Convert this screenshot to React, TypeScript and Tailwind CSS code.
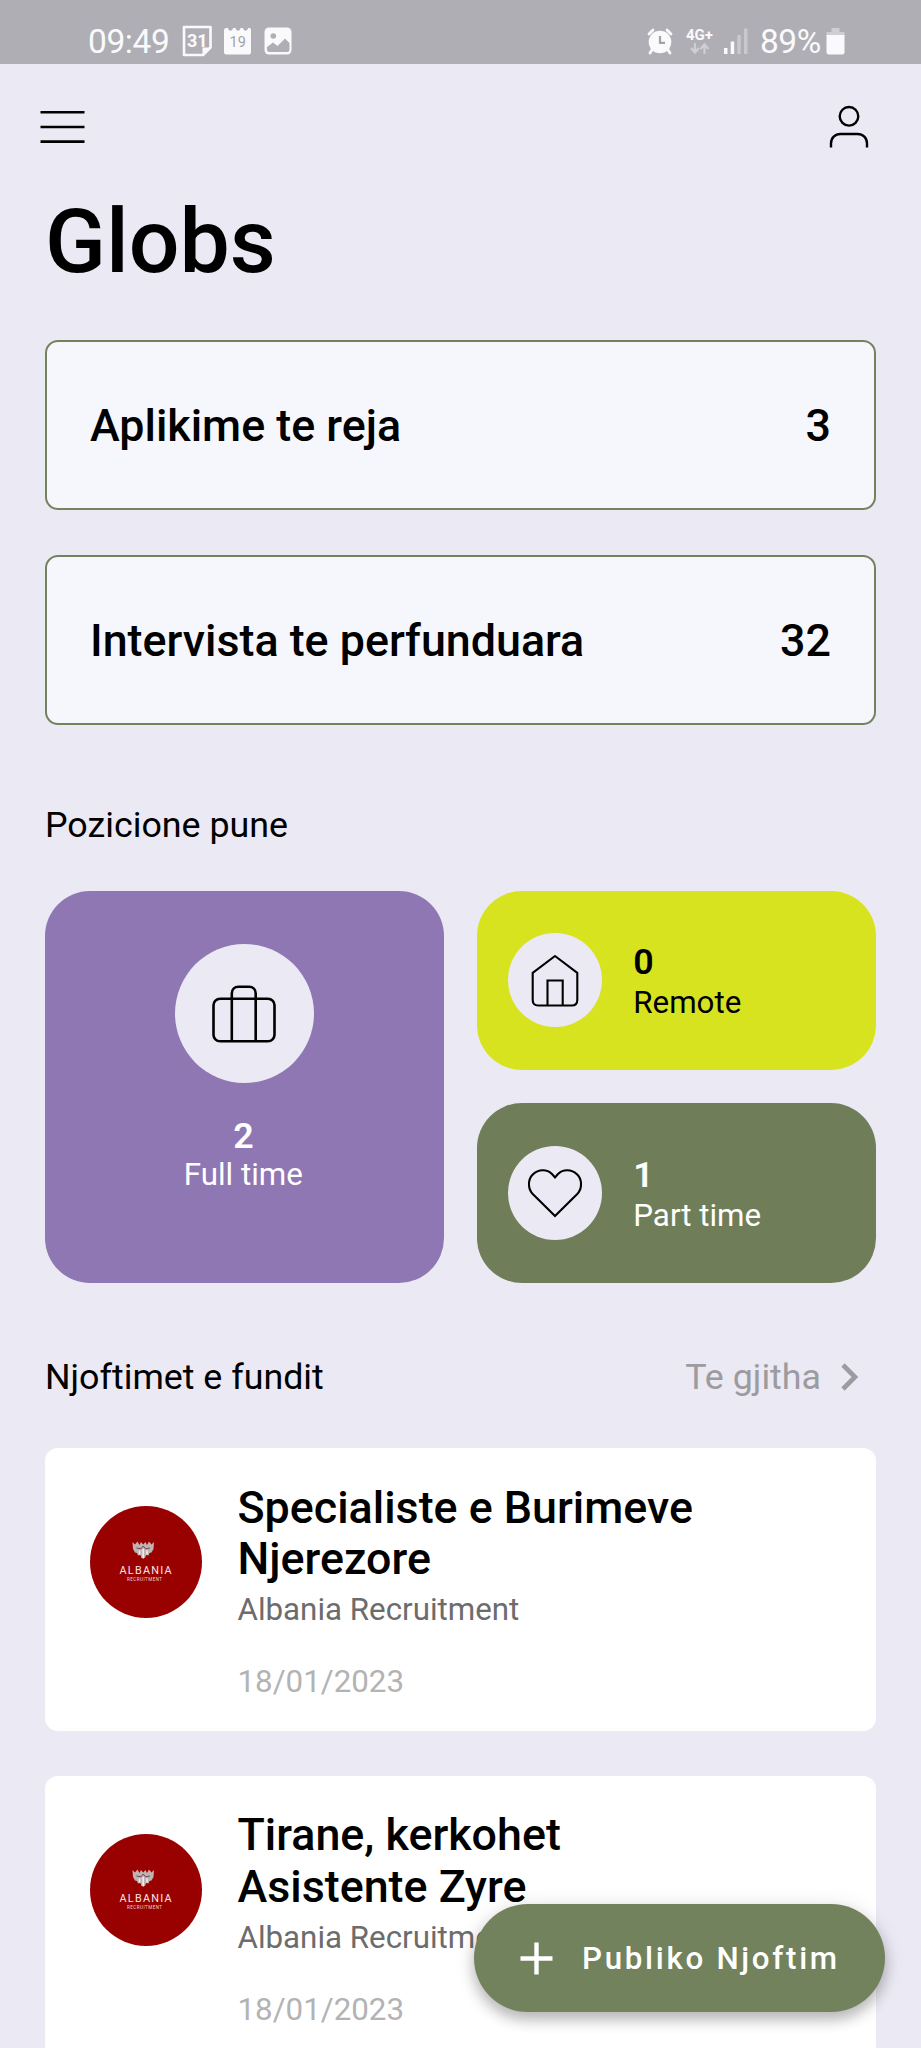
import React from 'react';

interface Stat {
    label: string;
    value: number;
}

interface Job {
    id: number;
    title: string[];
    company: string;
    date: string;
}

const stats: Stat[] = [
    { label: 'Aplikime te reja', value: 3 },
    { label: 'Intervista te perfunduara', value: 32 },
];

const jobs: Job[] = [
    { id: 1, title: ['Specialiste e Burimeve', 'Njerezore'], company: 'Albania Recruitment', date: '18/01/2023' },
    { id: 2, title: ['Tirane, kerkohet', 'Asistente Zyre'], company: 'Albania Recruitment', date: '18/01/2023' },
];

const StatusBar: React.FC = () => (
    <div className="flex h-16 items-end justify-between bg-[#afaeb5] pr-[76px] pb-[5px] pl-[88px] text-[#fafafc]">
        <div className="flex items-center">
            <span className="w-[94px] pt-[3px] text-[33.5px] leading-[34px] tracking-[-0.4px]">09:49</span>
            {/* Google calendar */}
            <svg width="31" height="32" viewBox="0 0 31 32" fill="none">
                <path d="M2 2H28.5V22.5L21 30H2Z" stroke="currentColor" strokeWidth="2.6" strokeLinejoin="round" />
                <path d="M20.5 30V22.5H28.5Z" fill="currentColor" />
                <text x="15.3" y="22.3" textAnchor="middle" fontSize="18" fontWeight="700" fill="currentColor">31</text>
            </svg>
            {/* Samsung calendar */}
            <svg width="28" height="28" viewBox="0 0 28 28" className="ml-[11px]">
                <path d="M2.5 1H4C4.5 4.5 8.5 4.5 9 1H11.5C12 4.5 16 4.5 16.5 1H19C19.5 4.5 23.5 4.5 24 1H25.5Q27 1 27 3V25Q27 27.5 24.5 27.5H2.5Q0 27.5 0 25V3Q0 1 2.5 1Z" fill="currentColor" />
                <text x="13.7" y="20" textAnchor="middle" fontSize="14.5" fill="#a3a2a8">19</text>
            </svg>
            {/* Gallery */}
            <svg width="28" height="28" viewBox="0 0 28 28" className="ml-3">
                <rect x="0.5" y="0.5" width="27" height="27" rx="4.5" fill="currentColor" />
                <circle cx="9.3" cy="9" r="2.8" fill="#afaeb5" />
                <path d="M3 20L9 15.5L13.5 19L21 11.5L25.5 16V22.5Q25.5 25 23 25H5Q3 25 3 22.5Z" fill="#afaeb5" />
            </svg>
        </div>
        <div className="flex items-center">
            <svg width="26" height="28" viewBox="0 0 26 28" fill="none" stroke="currentColor" className="-ml-px">
                <circle cx="13" cy="15" r="11.3" fill="currentColor" stroke="none" />
                <path d="M2 7L6 3M24 7L20 3M5.5 22L3 26M20.5 22L23 26" strokeWidth="2.8" strokeLinecap="round" />
                <path d="M13 9V15.8H18" stroke="#a3a2a8" strokeWidth="2.2" />
            </svg>
            <svg width="28" height="28" viewBox="0 0 28 28" className="ml-[13px]">
                <text x="0" y="13.3" textLength="27" fontSize="15" fontWeight="700" fill="currentColor">4G+</text>
                <path d="M9 16V25M5 21L9 25.5L13 21M18.5 27V17.5M14.5 22L18.5 17.5L22.5 22" fill="none" stroke="#cfced3" strokeWidth="2.2" />
            </svg>
            <svg width="25" height="28" viewBox="0 0 25 28" className="ml-2.5">
                <rect x="0" y="21" width="3.5" height="6" fill="currentColor" />
                <rect x="6.7" y="14.5" width="3.5" height="12.5" fill="currentColor" />
                <rect x="13.3" y="8" width="3.5" height="19" fill="#c9c8cd" />
                <rect x="20" y="1.5" width="3.5" height="25.5" fill="#c9c8cd" />
            </svg>
            <span className="ml-[11px] w-[62px] pt-[3px] text-[33.5px] leading-[34px] tracking-[-0.5px]">89%</span>
            <svg width="19" height="28" viewBox="0 0 19 28" className="ml-[4px]">
                <path d="M5.5 1H13.5V5H18.5V10H0.5V5H5.5Z" fill="#cfced3" />
                <path d="M0.5 8H18.5V25Q18.5 27.5 16 27.5H3Q0.5 27.5 0.5 25Z" fill="currentColor" />
            </svg>
        </div>
    </div>
);

const Header: React.FC = () => (
    <header className="flex h-[125px] items-center justify-between pr-[52px] pl-10">
        <button aria-label="Menu">
            <svg width="45" height="34" viewBox="0 0 45 34" stroke="#000" strokeWidth="2.6">
                <path d="M0.5 2.3H44.5M0.5 17H44.5M0.5 31.6H44.5" />
            </svg>
        </button>
        <button aria-label="Profile" className="-mt-px">
            <svg width="40" height="43" viewBox="0 0 40 43" fill="none" stroke="#000" strokeWidth="2.4">
                <circle cx="20" cy="11.3" r="9.3" />
                <path d="M2 42.5V38.5C2 33 6 29 11.5 29H28.5C34 29 38 33 38 38.5V42.5" />
            </svg>
        </button>
    </header>
);

const BriefcaseIcon: React.FC = () => (
    <svg width="64" height="58" viewBox="0 0 64 58" fill="none" stroke="#000" strokeWidth="2.6">
        <rect x="1.5" y="13.7" width="61" height="42.5" rx="6.5" />
        <path d="M19.8 56V8.5C19.8 4.5 22.5 1.7 26.5 1.7H37C41 1.7 43.7 4.5 43.7 8.5V56" />
    </svg>
);

const HomeIcon: React.FC = () => (
    <svg width="48" height="53" viewBox="0 0 48 53" fill="none" stroke="#000" strokeWidth="2.1" className="mt-px">
        <path d="M24 2L46.3 18.8V46Q46.3 51.5 40.8 51.5H7.2Q1.7 51.5 1.7 46V18.8Z" strokeLinejoin="round" />
        <path d="M16.5 51.5V26.5H31.7V51.5" />
    </svg>
);

const HeartIcon: React.FC = () => (
    <svg width="54" height="49" viewBox="0 0 54 49" fill="none" stroke="#000" strokeWidth="2.1" className="mt-px">
        <path d="M27 47L5 25.2C-0.5 19.5 -0.2 10.5 4.8 5.5C10.5 0 19 0 24 5L27 8.5L30 5C35 0 43.5 0 49.2 5.5C54.2 10.5 54.5 19.5 49 25.2Z" />
    </svg>
);

const CompanyLogo: React.FC = () => (
    <svg width="112" height="112" viewBox="0 0 112 112" className="mt-[58px] ml-[44.5px] shrink-0">
        <circle cx="56" cy="56" r="56" fill="#990000" />
        {/* Double-headed eagle */}
        <path d="M42.5 36L45 38.5L47.5 35.5L49.5 39L51 36L53.2 38.5L55.5 36L57 39L59 35.5L61.5 38.5L64 36L63.5 43L61.5 46.5L59.5 47L58.5 49.5L56 49L55 52H51.5L50.5 49L48 49.5L47 47L45 46.5L43 43Z" fill="#c2b3b3" />
        <path d="M46.5 42L51 42.8L53.2 40L55.5 42.8L60 42" fill="none" stroke="#5e3f3f" strokeWidth="0.9" />
        <path d="M53.2 43V52.5M49.5 44.5V48.5M57 44.5V48.5" stroke="#f5f0f0" strokeWidth="1.5" />
        <text x="29.5" y="67.8" textLength="52" lengthAdjust="spacing" fontSize="10.8" fill="#f6e7e7">ALBANIA</text>
        <text x="37" y="75.3" textLength="35" lengthAdjust="spacing" fontSize="4.5" fill="#f0d5d5">RECRUITMENT</text>
    </svg>
);

const JobCard: React.FC<{ job: Job }> = ({ job }) => (
    <article className="flex h-[282.5px] rounded-[13px] bg-white">
        <CompanyLogo />
        <div className="pt-[33.5px] pl-[36px]">
            <h3 className="text-[44.8px] leading-[51.5px] font-medium">
                {job.title.map(line => (
                    <span key={line} className="block">{line}</span>
                ))}
            </h3>
            <p className="mt-[6.5px] text-[31.3px] leading-[37px] text-[#6c6c6c]">{job.company}</p>
            <p className="mt-[35px] text-[31.3px] leading-[37px] text-[#b3b3b3]">{job.date}</p>
        </div>
    </article>
);

const App: React.FC = () => {
    return (
        <div className="relative h-[2048px] w-[921px] overflow-hidden bg-[#ebe9f3] font-[Roboto,sans-serif] text-black">
            <StatusBar />
            <Header />

            <main className="px-[45px]">
                <h1 className="pt-px text-[89.5px] leading-[104px] font-medium">Globs</h1>

                <section className="mt-[46px] flex flex-col gap-[45px]">
                    {stats.map(stat => (
                        <div key={stat.label} className="flex h-[170px] items-center justify-between rounded-[13px] border-2 border-[#74835e] bg-[#f6f7fc] px-[43px] pt-0.5 text-[44.8px] font-medium">
                            <span>{stat.label}</span>
                            <span>{stat.value}</span>
                        </div>
                    ))}
                </section>

                <h2 className="mt-[79px] text-[35.8px] leading-[42px]">Pozicione pune</h2>
                <section className="mt-[44.5px] grid h-[392px] grid-cols-2 grid-rows-2 gap-[33.6px]">
                    <div className="row-span-2 flex flex-col items-center rounded-[45px] bg-[#8f77b3] pt-[53.5px] text-white">
                        <div className="flex size-[139px] items-center justify-center rounded-full bg-[#ebe9f3]">
                            <BriefcaseIcon />
                        </div>
                        <span className="mt-8 pr-0.5 text-[35.8px] leading-[42px] font-semibold">2</span>
                        <span className="-mt-px pr-0.5 text-[31.3px] leading-[37px]">Full time</span>
                    </div>
                    <div className="flex items-center rounded-[45px] bg-[#d8e31f] pl-[31px]">
                        <div className="flex size-[94px] items-center justify-center rounded-full bg-[#ebe9f3]">
                            <HomeIcon />
                        </div>
                        <div className="ml-[31px] flex flex-col pt-0.5">
                            <span className="text-[35.8px] leading-[42px] font-semibold">0</span>
                            <span className="mt-px text-[31.3px] leading-[37px]">Remote</span>
                        </div>
                    </div>
                    <div className="flex items-center rounded-[45px] bg-[#6f7e59] pl-[31px] text-white">
                        <div className="flex size-[94px] items-center justify-center rounded-full bg-[#ebe9f3]">
                            <HeartIcon />
                        </div>
                        <div className="ml-[31px] flex flex-col pt-0.5">
                            <span className="text-[35.8px] leading-[42px] font-semibold">1</span>
                            <span className="mt-px text-[31.3px] leading-[37px]">Part time</span>
                        </div>
                    </div>
                </section>

                <div className="mt-[73.5px] flex justify-between text-[35.8px] leading-[42px]">
                    <h2>Njoftimet e fundit</h2>
                    <button className="flex items-center pr-[17px] text-[#9c9ba0]">
                        Te gjitha
                        <svg width="18" height="28" viewBox="0 0 18 28" fill="none" stroke="currentColor" strokeWidth="4.6" className="ml-5">
                            <path d="M2 2L14 14L2 26" />
                        </svg>
                    </button>
                </div>
                <section className="mt-[50px] flex flex-col gap-[45px]">
                    {jobs.map(job => (
                        <JobCard key={job.id} job={job} />
                    ))}
                </section>
            </main>

            {/* Floating action button */}
            <button className="absolute right-9 bottom-9 flex h-[108px] w-[411px] items-center rounded-full bg-[#72825c] pl-[46px] text-white shadow-[0_8px_14px_rgba(0,0,0,0.24),0_2px_22px_rgba(0,0,0,0.10)]">
                <svg width="33" height="33" viewBox="0 0 33 33" stroke="currentColor" strokeWidth="4.4">
                    <path d="M16.5 0.5V32.5M0.5 16.5H32.5" />
                </svg>
                <span className="ml-[29px] pt-0.5 text-[31.3px] font-medium tracking-[2.7px] whitespace-nowrap">Publiko Njoftim</span>
            </button>
        </div>
    );
};

export default App;
